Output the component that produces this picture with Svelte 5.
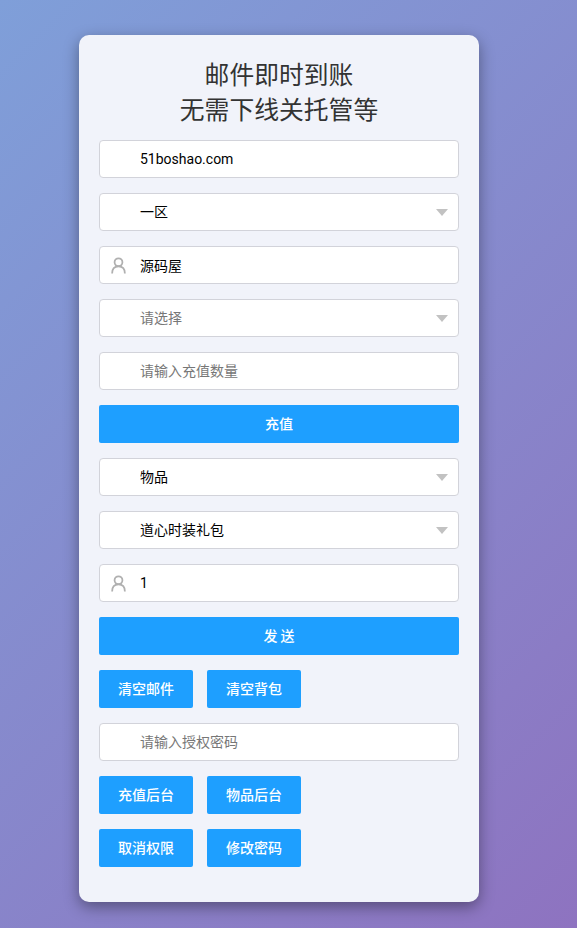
{#snippet person()}
  <svg class="icon" viewBox="0 0 16 18" aria-hidden="true">
    <circle cx="8" cy="5.500" r="4.200" />
    <path d="M1.200 17.500c0-4.500 2.500-7.500 6.800-7.500s6.800 3 6.800 7.500" />
  </svg>
{/snippet}

{#snippet arrow()}
  <span class="arrow"></span>
{/snippet}

<div class="page">
  <main class="card">
    <h1>邮件即时到账<br />无需下线关托管等</h1>

    <div class="field"><input value="51boshao.com" /></div>
    <div class="field"><span class="value">一区</span>{@render arrow()}</div>
    <div class="field">{@render person()}<input value="源码屋" /></div>
    <div class="field"><span class="value muted">请选择</span>{@render arrow()}</div>
    <div class="field"><input placeholder="请输入充值数量" /></div>
    <button class="btn wide">充值</button>

    <div class="field"><span class="value">物品</span>{@render arrow()}</div>
    <div class="field"><span class="value">道心时装礼包</span>{@render arrow()}</div>
    <div class="field">{@render person()}<input value="1" /></div>
    <button class="btn wide">发 送</button>

    <div class="row">
      <button class="btn">清空邮件</button>
      <button class="btn">清空背包</button>
    </div>

    <div class="field"><input placeholder="请输入授权密码" /></div>

    <div class="row">
      <button class="btn">充值后台</button>
      <button class="btn">物品后台</button>
    </div>
    <div class="row">
      <button class="btn">取消权限</button>
      <button class="btn">修改密码</button>
    </div>
  </main>
</div>

<style>
  :global(body) {
    margin: 0;
  }
  .page {
    box-sizing: border-box;
    height: 928px;
    padding-top: 35px;
    overflow: hidden;
    background: linear-gradient(135deg, #7f9fd9 0%, #8e73c0 100%);
    font-family: Roboto, "Noto Sans CJK SC", sans-serif;
  }
  .card {
    box-sizing: border-box;
    width: 400px;
    height: 867px;
    margin-left: 79px;
    padding: 21px 20px 0;
    border-radius: 10px;
    background: #f1f3fa;
    box-shadow: 0 5px 15px rgba(0, 0, 0, 0.38);
  }
  h1 {
    margin: 0 0 14px;
    font-family: "Noto Sans CJK SC", sans-serif;
    font-size: 24.800px;
    font-weight: 400;
    line-height: 35px;
    color: #333;
    text-align: center;
  }
  .field {
    box-sizing: border-box;
    position: relative;
    display: flex;
    align-items: center;
    height: 38px;
    margin-bottom: 15px;
    padding: 0 0 1px 40px;
    background: #fff;
    border: 1px solid #d2d3da;
    border-radius: 4px;
  }
  .field input {
    flex: 1;
    min-width: 0;
    padding: 0;
    border: 0;
    outline: 0;
    background: transparent;
    font: inherit;
    font-size: 14px;
    color: #000;
  }
  .field input::placeholder {
    color: #777;
    opacity: 1;
  }
  .value {
    font-size: 14px;
    line-height: 20px;
    color: #000;
  }
  .value.muted {
    color: #777;
  }
  .icon {
    position: absolute;
    left: 11px;
    top: 10px;
    width: 15px;
    height: 17px;
    fill: none;
    stroke: #b0b0b0;
    stroke-width: 1.900;
  }
  .arrow {
    position: absolute;
    right: 10px;
    top: 15px;
    width: 0;
    height: 0;
    border-left: 6px solid transparent;
    border-right: 6px solid transparent;
    border-top: 7px solid #c2c2c2;
  }
  .btn {
    box-sizing: border-box;
    display: block;
    width: 94px;
    height: 38px;
    padding: 0 0 2px;
    border: 0;
    border-radius: 2px;
    background: #1e9fff;
    color: #fff;
    font-family: "Noto Sans CJK SC", sans-serif;
    font-size: 14px;
    font-weight: 500;
  }
  .btn.wide {
    width: 100%;
    margin-bottom: 15px;
  }
  .row {
    display: flex;
    gap: 14px;
    margin-bottom: 15px;
  }
</style>
